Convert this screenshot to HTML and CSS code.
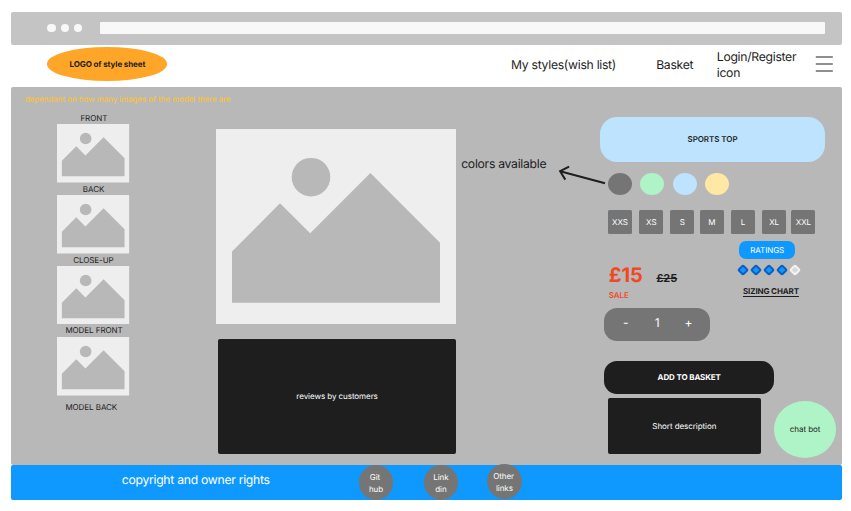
FILE: index.html
```html
<!DOCTYPE html>
<html lang="en">
<head>
<meta charset="utf-8">
<title>Sports top</title>
<link rel="stylesheet" href="styles.css">
</head>
<body>
<svg width="0" height="0" class="defs" aria-hidden="true">
  <symbol id="picture" viewBox="0 0 240 195" preserveAspectRatio="none">
    <rect width="240" height="195" fill="#eeeeee"/>
    <circle cx="95" cy="48.2" r="19.3" fill="#b8b8b8"/>
    <path d="M16 122.5 64 74.3 94.2 104.3 154.4 44 224 113.8V173.8H16Z" fill="#b8b8b8"/>
  </symbol>
  <symbol id="diamond" viewBox="0 0 12 12">
    <rect x="2.7" y="2.7" width="6.6" height="6.6" rx="1.2" transform="rotate(45 6 6)" fill="#0f99ff" stroke="#0a5dc2" stroke-width="2"/>
  </symbol>
  <symbol id="diamond-off" viewBox="0 0 12 12">
    <rect x="2.7" y="2.7" width="6.6" height="6.6" rx="1.2" transform="rotate(45 6 6)" fill="#d9d9d9" stroke="#f3f3f3" stroke-width="2"/>
  </symbol>
</svg>
<div class="page">
  <div class="browser">
    <i class="dot"></i><i class="dot"></i><i class="dot"></i>
    <div class="address"></div>
  </div>
  <header class="header">
    <div class="logo">LOGO of style sheet</div>
    <nav class="nav">
      <a class="wish">My styles(wish list)</a>
      <a class="basket">Basket</a>
      <a class="login">Login/Register<br>icon</a>
    </nav>
    <svg class="menu" width="18" height="18" viewBox="0 0 18 18" stroke="#6b6b6b" stroke-width="1.5"><path d="M.8 2H17.8M.8 8.9H17.8M.8 16H17.8"/></svg>
  </header>
  <main class="main">
    <section class="gallery">
      <p class="note">dependant on how many images of the model there are</p>
      <p class="cap front">FRONT</p>
      <svg class="thumb"><use href="#picture"/></svg>
      <p class="cap back">BACK</p>
      <svg class="thumb"><use href="#picture"/></svg>
      <p class="cap close">CLOSE-UP</p>
      <svg class="thumb"><use href="#picture"/></svg>
      <p class="cap model">MODEL FRONT</p>
      <svg class="thumb"><use href="#picture"/></svg>
      <p class="cap model last">MODEL BACK</p>
    </section>
    <section class="center">
      <svg class="hero"><use href="#picture"/></svg>
      <div class="reviews">reviews by customers</div>
    </section>
    <section class="callout">
      <span>colors available</span>
      <svg class="arrow" width="50" height="24" viewBox="0 0 50 24" fill="none" stroke="#1e1e1e" stroke-width="2"><path d="M47 19.2 2.1 7.2M11.1 2.6 2.1 7.2 7.3 15.6"/></svg>
    </section>
    <section class="product">
      <h1 class="title">SPORTS TOP</h1>
      <div class="swatches"><i class="grey"></i><i class="green"></i><i class="blue"></i><i class="yellow"></i></div>
      <div class="sizes"><b>XXS</b><b>XS</b><b>S</b><b>M</b><b>L</b><b>XL</b><b>XXL</b></div>
      <div class="info">
        <div class="price">
          <div class="amounts"><strong>£15</strong><s>£25</s></div>
          <div class="sale">SALE</div>
        </div>
        <div class="rating">
          <div class="pill">RATINGS</div>
          <div class="stars">
            <svg><use href="#diamond"/></svg><svg><use href="#diamond"/></svg><svg><use href="#diamond"/></svg><svg><use href="#diamond"/></svg><svg><use href="#diamond-off"/></svg>
          </div>
          <div class="chart">SIZING CHART</div>
        </div>
      </div>
      <div class="qty"><span>-</span><span>1</span><span>+</span></div>
      <div class="add">ADD TO BASKET</div>
      <div class="bottom">
        <div class="desc">Short description</div>
        <div class="chat">chat bot</div>
      </div>
    </section>
  </main>
  <footer class="footer">
    <p class="copy">copyright and owner rights</p>
    <a class="link git"><span>Git</span><span>hub</span></a>
    <a class="link din"><span>Link</span><span>din</span></a>
    <a class="link other"><span>Other</span><span>links</span></a>
  </footer>
</div>
</body>
</html>
```
FILE: styles.css
```css
* { box-sizing: border-box; margin: 0; padding: 0; }
body { background: #fff; color: #1e1e1e; font: 8px/12px Inter, "Liberation Sans", sans-serif; letter-spacing: -.06px; white-space: nowrap; text-rendering: geometricPrecision; }
.defs { display: block; }
.page { width: 851px; height: 511px; padding: 12px 9px 0 11.4px; overflow: hidden; }
svg { display: block; }

.browser { height: 32.5px; background: #c4c4c4; border-radius: 2px; display: flex; align-items: center; padding: 0 17.5px 0 36px; }
.dot { width: 8.6px; height: 8.6px; border-radius: 50%; background: #f8f8f8; margin-right: 4.6px; margin-top: -.6px; }
.address { flex: 1; height: 12px; margin: -1px 0 0 13.2px; background: #f8f8f8; border-radius: 1px; }

.header { height: 42.5px; display: flex; align-items: flex-start; }
.logo { width: 120px; height: 33.5px; margin: 2.7px 0 0 36px; border-radius: 50%; background: #ffa629; display: flex; align-items: center; justify-content: center; font-weight: 700; letter-spacing: -.1px; }
.nav { display: flex; font-size: 12.2px; letter-spacing: -.28px; line-height: 16px; margin-left: 343.6px; }
.wish { width: 145.2px; padding-top: 12px; }
.basket { width: 60.6px; padding-top: 12px; }
.login { width: 98.6px; padding-top: 4.5px; }
.menu { margin-top: 10.5px; }

.main { height: 378px; background: #b8b8b8; border-radius: 2px; display: grid; grid-template-columns: 204.8px 240px 144px 1fr; }
.note { color: #ffc629; margin: 6px 0 0 13.6px; }
.cap { height: 12px; }
.thumb { width: 72.4px; height: 58.7px; margin-left: 46px; }
.front { margin: 7.2px 0 0 69px; }
.back { margin: 0 0 0 71.4px; }
.close { margin: 0 0 0 61.8px; }
.model { margin: 0 0 0 54px; height: 13px; }
.last { padding-top: 5px; }

.hero { width: 240px; height: 195px; margin-top: 42px; }
.reviews { width: 238.6px; height: 115px; margin: 14.5px 0 0 1.6px; background: #1e1e1e; color: #fff; border-radius: 2px; display: flex; align-items: center; justify-content: center; }

.callout { display: flex; align-items: flex-start; padding: 69px 0 0 5px; font-size: 12.2px; letter-spacing: -.28px; line-height: 16px; }
.callout span { width: 85px; }
.arrow { margin: 7.5px 0 0 12px; flex: none; }

.title { width: 224.7px; height: 45px; margin-top: 29.5px; border-radius: 17px; background: #bde3ff; font-size: 8px; font-weight: 600; display: flex; align-items: center; justify-content: center; }
.swatches { display: flex; gap: 8.3px; padding: 11.4px 0 0 7.8px; }
.swatches i { width: 24px; height: 22px; border-radius: 50%; }
.grey { background: #757575; }
.green { background: #aff4c6; }
.blue { background: #bde3ff; }
.yellow { background: #ffe8a3; }
.sizes { display: grid; grid-template-columns: 31.3px 31px 29.5px 31.2px 31.2px 29.3px 24px; padding: 15.6px 0 0 7.8px; }
.sizes b { width: 24px; height: 24px; border-radius: 1.5px; background: #757575; color: #fff; font-weight: 400; display: flex; align-items: center; justify-content: center; }
.info { display: flex; height: 74px; }
.price { width: 138.6px; padding: 28.5px 0 0 8.6px; }
.amounts { display: flex; align-items: baseline; line-height: 24px; }
.amounts strong { font-size: 20px; color: #f24822; width: 47.6px; }
.amounts s { font-size: 11px; font-weight: 700; }
.sale { color: #f24822; font-weight: 600; margin-top: -.5px; }
.pill { width: 56px; height: 18px; margin: 7px 0 0 .4px; border-radius: 7px; background: #0f99ff; color: #fff; display: flex; align-items: center; justify-content: center; }
.stars { display: flex; margin: 4.7px 0 0 -1.5px; gap: 1px; }
.stars svg { width: 12px; height: 12px; }
.chart { margin: 9px 0 0 4.2px; font-weight: 700; letter-spacing: -.13px; text-decoration: underline; text-underline-offset: 1.5px; text-decoration-thickness: 1px; }
.qty { width: 106px; height: 33px; margin-left: 4px; border-radius: 13px; background: #757575; color: #fff; font-size: 12px; line-height: 30.6px; display: grid; grid-template-columns: 1fr 1fr 1fr; padding: 0 6px; text-align: center; }
.add { width: 170px; height: 33px; margin: 19.5px 0 0 4px; border-radius: 13px; background: #1e1e1e; color: #fff; font-weight: 700; letter-spacing: -.13px; display: flex; align-items: center; justify-content: center; }
.bottom { display: flex; padding: 3.8px 0 0 8px; }
.desc { width: 152.4px; height: 56px; border-radius: 2px; background: #1e1e1e; color: #fff; display: flex; align-items: center; justify-content: center; }
.chat { width: 62.7px; height: 57px; margin: 3px 0 0 13.2px; border-radius: 50%; background: #aff4c6; display: flex; align-items: center; justify-content: center; }

.footer { height: 34.6px; background: #0f99ff; border-radius: 2px; color: #fff; display: flex; align-items: flex-start; }
.copy { width: 236.8px; margin: 7px 0 0 110.4px; font-size: 12.2px; letter-spacing: -.28px; line-height: 16px; }
.link { width: 34.8px; height: 34.8px; border-radius: 50%; background: #757575; display: flex; flex-direction: column; align-items: center; padding-top: 6px; }
.git span:first-child { margin-right: 2px; }
.din { margin-left: 30.2px; }
.other { margin: -.6px 0 0 28.6px; }
.other span:first-child { margin-right: 1.5px; }
```
